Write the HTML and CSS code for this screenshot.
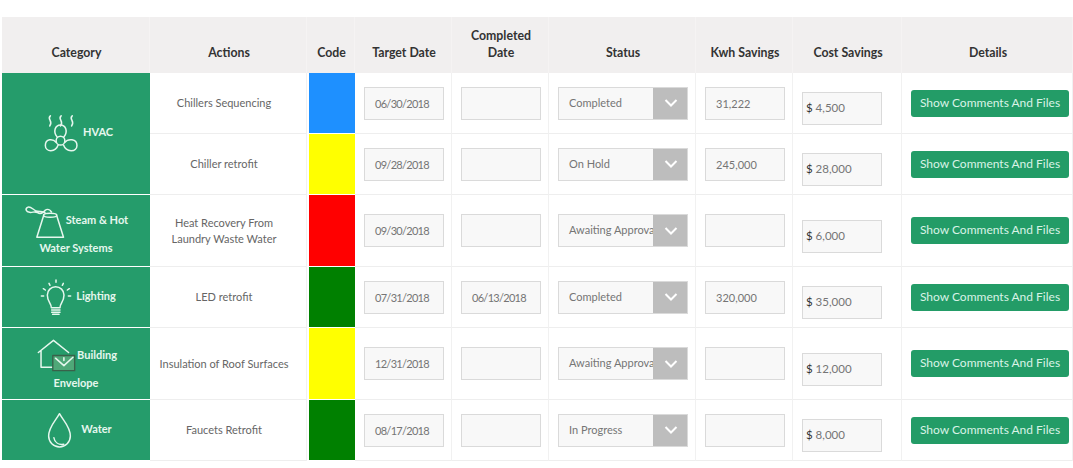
FILE: index.html
```html
<!DOCTYPE html>
<html lang="en">
<head>
<meta charset="utf-8">
<title>Projects</title>
<link rel="stylesheet" href="styles.css">
</head>
<body>
<main class="page">
<table class="grid">
<colgroup>
<col class="c-cat"><col class="c-act"><col class="c-code"><col class="c-date"><col class="c-date"><col class="c-status"><col class="c-kwh"><col class="c-cost"><col class="c-det">
</colgroup>
<thead>
<tr>
<th>Category</th><th>Actions</th><th>Code</th><th>Target Date</th><th>Completed<br>Date</th><th>Status</th><th>Kwh Savings</th><th>Cost Savings</th><th>Details</th>
</tr>
</thead>
<tbody>
<tr class="short">
<td class="cat" rowspan="2">
<svg class="ico ico-hvac" viewBox="70 40 110 118"><path d="M92 45c-12 10 10 16-2 30 M124 45c-12 10 10 16-2 30 M157 45c-12 10 10 16-2 30"/><path d="M112 108C99 92 106 72 122 72s23 20 10 36"/><circle cx="122" cy="119" r="13"/><path d="M109 124C100 112 77 112 77 133c0 20 30 22 38-1"/><path d="M135 124c9-12 36-12 36 9 0 20-32 22-40-1"/></svg><span class="cat-t">HVAC</span>
</td>
<td class="act">Chillers Sequencing</td><td class="code blue"></td>
<td><div class="box date">06/30/2018</div></td><td><div class="box"></div></td>
<td><div class="sel"><span class="sel-t">Completed</span><span class="sel-a"><svg viewBox="0 0 14 8"><path d="M1.5 1 7 6.5 12.500 1"/></svg></span></div></td>
<td><div class="box">31,222</div></td>
<td><div class="box money"><b>$</b> 4,500</div></td>
<td><button class="btn" type="button">Show Comments And Files</button></td>
</tr>
<tr class="short">
<td class="act">Chiller retrofit</td><td class="code yellow"></td>
<td><div class="box date">09/28/2018</div></td><td><div class="box"></div></td>
<td><div class="sel"><span class="sel-t">On Hold</span><span class="sel-a"><svg viewBox="0 0 14 8"><path d="M1.5 1 7 6.5 12.500 1"/></svg></span></div></td>
<td><div class="box">245,000</div></td>
<td><div class="box money"><b>$</b> 28,000</div></td>
<td><button class="btn" type="button">Show Comments And Files</button></td>
</tr>
<tr class="tall">
<td class="cat two">
<svg class="ico ico-steam" viewBox="42 22 125 105"><path d="M100 58 80 122h80L140 58"/><ellipse cx="120" cy="56" rx="20" ry="6"/><path d="M106 50C98 40 88 48 76 42 66 36 60 28 52 32 44 37 48 45 58 47 68 49 72 42 82 48c8 5 16 2 24-8 6-4 14 0 18 6"/></svg><span class="cat-t">Steam &amp; Hot<br>Water Systems</span>
</td>
<td class="act">Heat Recovery From<br>Laundry Waste Water</td><td class="code red"></td>
<td><div class="box date">09/30/2018</div></td><td><div class="box"></div></td>
<td><div class="sel"><span class="sel-t">Awaiting Approval</span><span class="sel-a"><svg viewBox="0 0 14 8"><path d="M1.5 1 7 6.5 12.500 1"/></svg></span></div></td>
<td><div class="box"></div></td>
<td><div class="box money"><b>$</b> 6,000</div></td>
<td><button class="btn" type="button">Show Comments And Files</button></td>
</tr>
<tr class="short">
<td class="cat">
<svg class="ico ico-bulb" viewBox="88 27 96 108"><path d="M122 113c0-14-12-18-12-38a25 25 0 0 1 50 0c0 20-12 24-12 38z"/><path d="M123 120h25M123 127h25M126 133h19"/><path d="M92 78h7M98 56l6 4M115 40l3 6M136 30v7M158 40l-3 6M176 56l-6 4M180 78h-7"/></svg><span class="cat-t">Lighting</span>
</td>
<td class="act">LED retrofit</td><td class="code green"></td>
<td><div class="box date">07/31/2018</div></td><td><div class="box date">06/13/2018</div></td>
<td><div class="sel"><span class="sel-t">Completed</span><span class="sel-a"><svg viewBox="0 0 14 8"><path d="M1.5 1 7 6.5 12.500 1"/></svg></span></div></td>
<td><div class="box">320,000</div></td>
<td><div class="box money"><b>$</b> 35,000</div></td>
<td><button class="btn" type="button">Show Comments And Files</button></td>
</tr>
<tr class="tall">
<td class="cat three">
<svg class="ico ico-env" viewBox="78 28 116 98"><path d="M82 68 127 32l45 36M90 62v50h35"/><rect class="env" x="125" y="77" width="65" height="45"/><path d="M133 85l25 22 27-25M158 84v8"/></svg><span class="cat-t">Building<br>Envelope</span>
</td>
<td class="act">Insulation of Roof Surfaces</td><td class="code yellow"></td>
<td><div class="box date">12/31/2018</div></td><td><div class="box"></div></td>
<td><div class="sel"><span class="sel-t">Awaiting Approval</span><span class="sel-a"><svg viewBox="0 0 14 8"><path d="M1.5 1 7 6.5 12.500 1"/></svg></span></div></td>
<td><div class="box"></div></td>
<td><div class="box money"><b>$</b> 12,000</div></td>
<td><button class="btn" type="button">Show Comments And Files</button></td>
</tr>
<tr class="short">
<td class="cat">
<svg class="ico ico-drop" viewBox="112 244 76 112"><path d="M150 249c-12 22-33 40-33 68a33 33 0 0 0 66 0c0-28-21-46-33-68z"/><path d="M133 322c2 14 14 22 30 20"/></svg><span class="cat-t">Water</span>
</td>
<td class="act">Faucets Retrofit</td><td class="code green"></td>
<td><div class="box date">08/17/2018</div></td><td><div class="box"></div></td>
<td><div class="sel"><span class="sel-t">In Progress</span><span class="sel-a"><svg viewBox="0 0 14 8"><path d="M1.5 1 7 6.5 12.500 1"/></svg></span></div></td>
<td><div class="box"></div></td>
<td><div class="box money"><b>$</b> 8,000</div></td>
<td><button class="btn" type="button">Show Comments And Files</button></td>
</tr>
</tbody>
</table>
</main>
</body>
</html>
```
FILE: styles.css
```css
* { box-sizing: border-box; }
html, body { margin: 0; background: #fff; }
body { font-family: Lato, "Open Sans", sans-serif; color: #666; font-size: 11px; }
.page { padding: 17px 0 0 2px; }
.grid { width: 1071px; table-layout: fixed; border-collapse: separate; border-spacing: 0; }
.c-cat { width: 148px; }
.c-act { width: 157px; }
.c-code { width: 48px; }
.c-date { width: 97px; }
.c-status { width: 147px; }
.c-kwh { width: 97px; }
.c-cost { width: 109px; }
.c-det { width: 171px; }
th {
  height: 56px;
  background: #f1efef;
  color: #333;
  font-size: 12.3px;
  font-weight: 700;
  line-height: 17px;
  vertical-align: bottom;
  padding: 0 0 12px 2px;
  border-right: 1px solid #f5f3f3;
}
td {
  padding: 0 9px;
  border-bottom: 1px solid #eeeeee;
  border-right: 1px solid #f1f1f1;
  vertical-align: middle;
}
.short td { height: 61px; }
.tall td { height: 72px; }
td.cat {
  padding: 0;
  background: #259c6b;
  color: #e6f7ee;
  font-size: 11px;
  font-weight: 700;
  line-height: 18px;
  text-align: center;
  border-bottom: 1px solid #fff;
  border-right: 0;
}
td.three { line-height: 21px; }
.ico {
  fill: none;
  stroke: #e6f7ee;
  stroke-width: 4.5;
  stroke-linecap: round;
  stroke-linejoin: round;
}
.ico-hvac { width: 37px; height: 40px; margin: 0 3px 0 4px; vertical-align: -18px; }
.ico-steam { width: 42px; height: 35px; vertical-align: -15px; }
.ico-bulb { width: 32px; height: 36px; margin: 0 4px 0 4px; vertical-align: -15px; }
.ico-env { width: 39px; height: 33px; margin: 4px 1px 0 2px; vertical-align: -13px; }
.ico-drop { width: 25px; height: 37px; margin: 0 9px 0 7px; vertical-align: -16px; }
.env { fill: #4fa878; stroke: #39614a; stroke-width: 4; }
td.act { text-align: center; line-height: 16px; padding: 0 8px 0 0; }
td.code { padding: 0; border-left: 2px solid #fff; border-right: 0; border-bottom: 1px solid #fff; }
.blue { background: #1e90ff; }
.yellow { background: #ffff00; }
.red { background: #ff0000; }
.green { background: #008000; }
.box {
  width: 80px;
  height: 33px;
  padding: 0 10px;
  line-height: 31px;
  background: #f8f8f8;
  border: 1px solid #dadada;
  color: #757575;
  white-space: nowrap;
  overflow: hidden;
}
.date { letter-spacing: -0.7px; }
.money { margin-top: 11px; padding: 0 3px; line-height: 30px; font-size: 11.5px; }
.money b { font-weight: 400; color: #333; }
.sel {
  position: relative;
  display: flex;
  width: 130px;
  height: 33px;
  background: #f8f8f8;
  border: 1px solid #dadada;
  overflow: hidden;
}
.sel-t { padding-left: 10px; line-height: 30px; color: #757575; white-space: nowrap; }
.sel-a {
  position: absolute;
  top: -1px;
  right: -1px;
  display: flex;
  align-items: center;
  justify-content: center;
  width: 35px;
  height: 33px;
  background: #bdbdbd;
}
.sel-a svg { width: 14px; height: 8px; fill: none; stroke: #fff; stroke-width: 2; }
.btn {
  display: block;
  width: 158px;
  height: 27px;
  padding: 0 0 2px;
  border: 0;
  border-radius: 3px;
  background: #239c67;
  color: #d9f3e6;
  font: 400 12px Lato, "Open Sans", sans-serif;
}
```
